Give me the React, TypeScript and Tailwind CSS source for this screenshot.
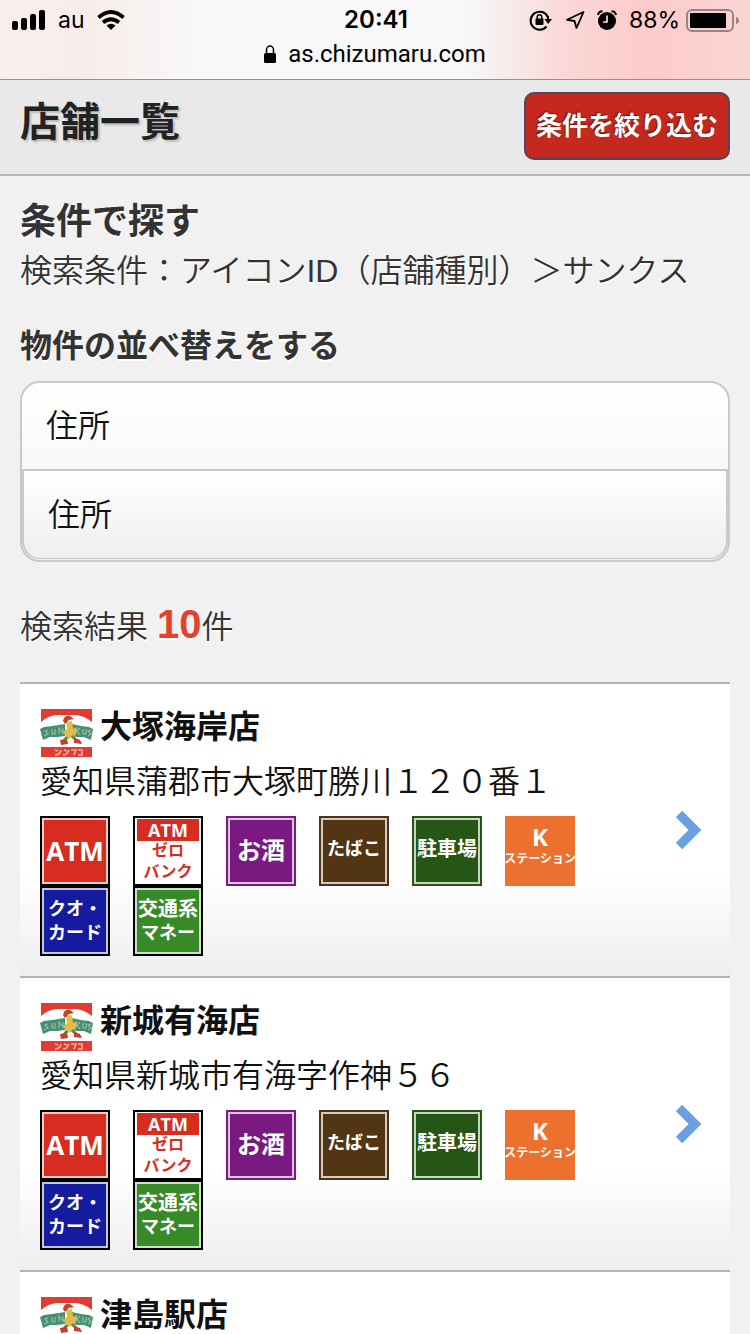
import { clsx } from "clsx";

const badges = {
  atm: {
    box: "border-black bg-[#d62d20] text-white",
    lines: [{ text: "ATM", className: "text-[26px] leading-8 font-['Open_Sans',sans-serif]" }],
  },
  zeroBank: {
    box: "border-black bg-white text-[#d62d20]",
    lines: [
      { text: "ATM", className: "text-lg leading-[22px] bg-[#d62d20] text-white font-['Open_Sans',sans-serif]" },
      { text: "ゼロ", className: "text-base leading-5" },
      { text: "バンク", className: "text-base leading-[22px]" },
    ],
  },
  alcohol: {
    box: "border-[#7a1a80] bg-[#7a1a80] text-white",
    lines: [{ text: "お酒", className: "text-2xl" }],
  },
  tobacco: {
    box: "border-[#4b3214] bg-[#523613] text-white",
    lines: [{ text: "たばこ", className: "text-lg leading-8 pb-1" }],
  },
  parking: {
    box: "border-[#255616] bg-[#255616] text-white",
    lines: [{ text: "駐車場", className: "text-xl leading-8 pb-1" }],
  },
  kStation: {
    box: "border-[#ec712e] bg-[#ec712e] text-white",
    lines: [
      { text: "K", className: "text-2xl leading-6 font-['Open_Sans',sans-serif]" },
      { text: "ステーション", className: "text-xs leading-5 pb-2" },
    ],
  },
  quoCard: {
    box: "border-black bg-[#141b9f] text-white",
    lines: [
      { text: "クオ・", className: "text-lg leading-6" },
      { text: "カード", className: "text-lg leading-6" },
    ],
  },
  transitMoney: {
    box: "border-black bg-[#378a26] text-white",
    lines: [
      { text: "交通系", className: "text-xl leading-6" },
      { text: "マネー", className: "text-lg leading-6" },
    ],
  },
};

type BadgeName = keyof typeof badges;

type Store = { name: string; address?: string; services?: BadgeName[] };

const services: BadgeName[] = [
  "atm",
  "zeroBank",
  "alcohol",
  "tobacco",
  "parking",
  "kStation",
  "quoCard",
  "transitMoney",
];

const stores: Store[] = [
  { name: "大塚海岸店", address: "愛知県蒲郡市大塚町勝川１２０番１", services },
  { name: "新城有海店", address: "愛知県新城市有海字作神５６", services },
  { name: "津島駅店" },
];

const Badge = ({ name }: { name: BadgeName }) => {
  const badge = badges[name];
  return (
    <li className={clsx("size-[70px] border-2", badge.box)}>
      <div
        className={clsx(
          "flex h-full flex-col justify-center border-2 text-center font-bold whitespace-nowrap",
          name === "kStation" ? "border-transparent" : "border-white/75"
        )}
      >
        {badge.lines.map((line) => (
          <span key={line.text} className={clsx("flex justify-center", line.className)}>
            {line.text}
          </span>
        ))}
      </div>
    </li>
  );
};

const StoreLogo = () => (
  <svg viewBox="0 0 53 49" className="h-[49px] w-[53px] flex-none" aria-hidden="true">
    <path d="M1 1h51v13Q43 7 35 7H18Q9 7 1 14z" fill="#e23b34" />
    <path d="M1 39h51v10H1z" fill="#e23b34" />
    <path d="M0 21l4-2 8-1 13-2v12l-8 1-7 0-7 3z" fill="#478f70" />
    <path d="M53 21l-4-2-8-1-9-2v12l5 1 7 0 7 3z" fill="#478f70" />
    <path d="M8 22l-3 1 3 3-4 2M12 21v5h3v-5M19 26v-6l4 5v-5M36 20v6M40 20l-3 3 3 4M43 21v5h3v-5M51 22l-3 1 3 3-3 2" stroke="#8fbfa8" strokeWidth="1.200" fill="none" />
    <path d="M26 14l6-1 1 8 4-2-2 9-7 3-5-7 4-3z" fill="#e4bc45" />
    <path d="M23 13q1-6 7-5l4 3-5 1-4 4z" fill="#bf4432" />
    <path d="M27 29l-4 5M32 28l5 5" stroke="#6f7d4c" strokeWidth="3" />
    <path d="M20 32l7-1 1 5-7 1zM34 30l6 2 2 4-8-1z" fill="#c93a30" />
    <path d="M15 42l3 1M15 47q5 0 6-5M24 42l3 1M23 47q4 0 6-5M31 42h5l-2 5M38 42h4v5h-4" stroke="#f5b79a" strokeWidth="1.500" fill="none" />
  </svg>
);

const StatusBar = () => (
  <div className="flex-none border-b border-[#929292] bg-[linear-gradient(to_right,#f9eeec_0%,#f8edeb_12%,#f8f8f8_26%,#f8f8f8_62%,#f8eaea_68%,#fbd6d6_76%,#fccbcb_86%,#fad4d4_100%)] font-[Roboto,sans-serif] text-black">
    <div className="grid h-10 grid-cols-[1fr_auto_1fr] items-center pr-[10px] pl-3">
      <div className="flex items-center">
        <svg viewBox="0 0 34 20" className="h-5 w-[34px]" aria-hidden="true">
          <rect x="0" y="11" width="6" height="9" rx="2" />
          <rect x="9" y="8" width="6" height="12" rx="2" />
          <rect x="18" y="4" width="6" height="16" rx="2" />
          <rect x="27" y="0" width="6" height="20" rx="2" />
        </svg>
        <span className="ml-3 font-['Inter',sans-serif] text-[23px]">au</span>
        <svg viewBox="0 0 28 20" className="ml-3 h-5 w-7" fill="none" stroke="#000" strokeWidth="3.800" aria-hidden="true">
          <path d="M1.500 7.500Q14-3.500 26.500 7.500" />
          <path d="M6 12.500Q14 6 22 12.500" />
          <path d="M9.500 15.500Q14 12 18.500 15.500L14 20z" fill="#000" stroke="none" />
        </svg>
      </div>
      <time className="font-['Inter',sans-serif] text-2xl font-semibold">20:41</time>
      <div className="flex items-center justify-end">
        <svg viewBox="0 0 24 22" className="h-[22px] w-6" aria-hidden="true">
          <path d="M17.500 17.500A9 9 0 1 1 18.800 8" fill="none" stroke="#000" strokeWidth="2" />
          <path d="M19 7v4" stroke="#000" strokeWidth="2" />
          <path d="M15.500 10H23l-3.800 5z" />
          <rect x="6.500" y="9.500" width="8" height="6.500" rx="1" />
          <path d="M8.200 10V8a2.300 2.300 0 0 1 4.600 0v2" fill="none" stroke="#000" strokeWidth="1.500" />
        </svg>
        <svg viewBox="0 0 20 20" className="ml-3 size-5" fill="none" stroke="#000" strokeWidth="1.800" strokeLinejoin="round" aria-hidden="true">
          <path d="M18.500 2L2 9.800l7.500 1.200L11.500 18z" />
        </svg>
        <svg viewBox="0 0 20 20" className="ml-3 size-5" aria-hidden="true">
          <circle cx="10" cy="11" r="9" />
          <path d="M10 5.500V12H6" fill="none" stroke="#fbdcdc" strokeWidth="1.700" />
          <path d="M1 5Q1.500 1.500 5.500 1.300M19 5Q18.500 1.500 14.500 1.300" fill="none" stroke="#000" strokeWidth="2" />
        </svg>
        <span className="ml-3 font-['Inter',sans-serif] text-[23px]">88%</span>
        <svg viewBox="0 0 54 24" className="ml-[6px] h-6 w-[54px]" aria-hidden="true">
          <rect x="1" y="2" width="46" height="21" rx="5" fill="none" stroke="#9a8383" strokeWidth="2" />
          <rect x="4" y="5" width="36" height="15" rx="1" />
          <path d="M50 9q3 1 3 3.500T50 16z" fill="#9a8383" />
        </svg>
      </div>
    </div>
    <div className="flex h-[39px] items-start justify-center gap-3">
      <svg viewBox="0 0 12 18" className="mt-[5px] h-[18px] w-3" aria-hidden="true">
        <rect y="8" width="12" height="10" rx="1.500" />
        <path d="M2.500 9V5a3.500 4 0 0 1 7 0v4" fill="none" stroke="#000" strokeWidth="1.500" />
      </svg>
      <span className="text-2xl leading-7">as.chizumaru.com</span>
    </div>
  </div>
);

const StoreCard = ({ name, address, services = [] }: Store) => (
  <li>
    <a
      href="#"
      className="flex min-h-[294px] items-center justify-between border-t-2 border-[#b4b4b4] bg-[linear-gradient(#fff_65%,#eee)] px-5 pt-5 pb-5 text-[#111]"
    >
      <div className="w-[590px] self-start">
        <div className="flex h-[54px] items-start gap-[7px] pt-1">
          <StoreLogo />
          <h3 className="text-[32px] leading-[38px] font-bold">{name}</h3>
        </div>
        {address && <p className="text-[32px] leading-[48px] font-[350]">{address}</p>}
        <ul className="mt-[10px] flex flex-wrap gap-x-[23px]">
          {services.map((service) => (
            <Badge key={service} name={service} />
          ))}
        </ul>
      </div>
      <svg viewBox="0 0 28 40" className="mr-[7px] h-10 w-7 flex-none" fill="none" stroke="#6c9fe2" strokeWidth="9" aria-hidden="true">
        <path d="M4 4l16 16L4 36" />
      </svg>
    </a>
  </li>
);

export default function App() {
  return (
    <div
      lang="ja"
      className="flex h-screen flex-col bg-[#f1f1f1] font-['Liberation_Sans','Noto_Sans_CJK_JP',sans-serif] text-[#333]"
    >
      <StatusBar />
      <header className="flex flex-none items-start justify-between border-b-2 border-[#b5b6b9] bg-[#e9e9e9] px-5 pt-3 pb-[14px]">
        <h1 className="text-[40px] leading-[60px] font-bold text-[#222] [text-shadow:2px_2px_2px_#bbb]">店舗一覧</h1>
        <button
          type="button"
          className="h-[68px] rounded-[10px] border-2 border-[#534560] bg-[#c5281c] px-[10px] text-[26px] font-bold text-white [text-shadow:-1px_-1px_1px_#711]"
        >
          条件を絞り込む
        </button>
      </header>
      <main className="flex-1 overflow-y-auto px-5 pt-[22px] [scrollbar-width:none]">
        <h2 className="text-4xl leading-[48px] font-bold [text-shadow:0_2px_0_#fff]">条件で探す</h2>
        <p className="text-[32px] leading-[50px] font-[350] [text-shadow:0_2px_0_#fff]">
          検索条件：アイコンID（店舗種別）＞サンクス
        </p>
        <h2 className="mt-6 text-[32px] leading-[52px] font-bold [text-shadow:0_2px_0_#fff]">物件の並べ替えをする</h2>
        <div className="mt-[9px] rounded-[20px] border-2 border-[#c9c9c9] bg-linear-to-b from-white to-[#f1f1f1] pb-px text-[32px] font-[350] text-[#111]">
          <label htmlFor="sort" className="block px-6 leading-[86px]">
            住所
          </label>
          <select
            id="sort"
            defaultValue="address"
            className="block h-[90px] w-full appearance-none rounded-b-[18px] border-2 border-b border-[#c9c9c9] bg-linear-to-b from-white to-[#efefef] px-6"
          >
            <option value="address">住所</option>
            <option value="name">店舗名</option>
          </select>
        </div>
        <p className="mt-[38px] text-[32px] leading-[48px] font-[350] [text-shadow:0_2px_0_#fff]">
          検索結果 <strong className="text-[40px] font-bold text-[#e2412c]">10</strong>件
        </p>
        <ul className="mt-[31px]">
          {stores.map((store) => (
            <StoreCard key={store.name} {...store} />
          ))}
        </ul>
      </main>
    </div>
  );
}
